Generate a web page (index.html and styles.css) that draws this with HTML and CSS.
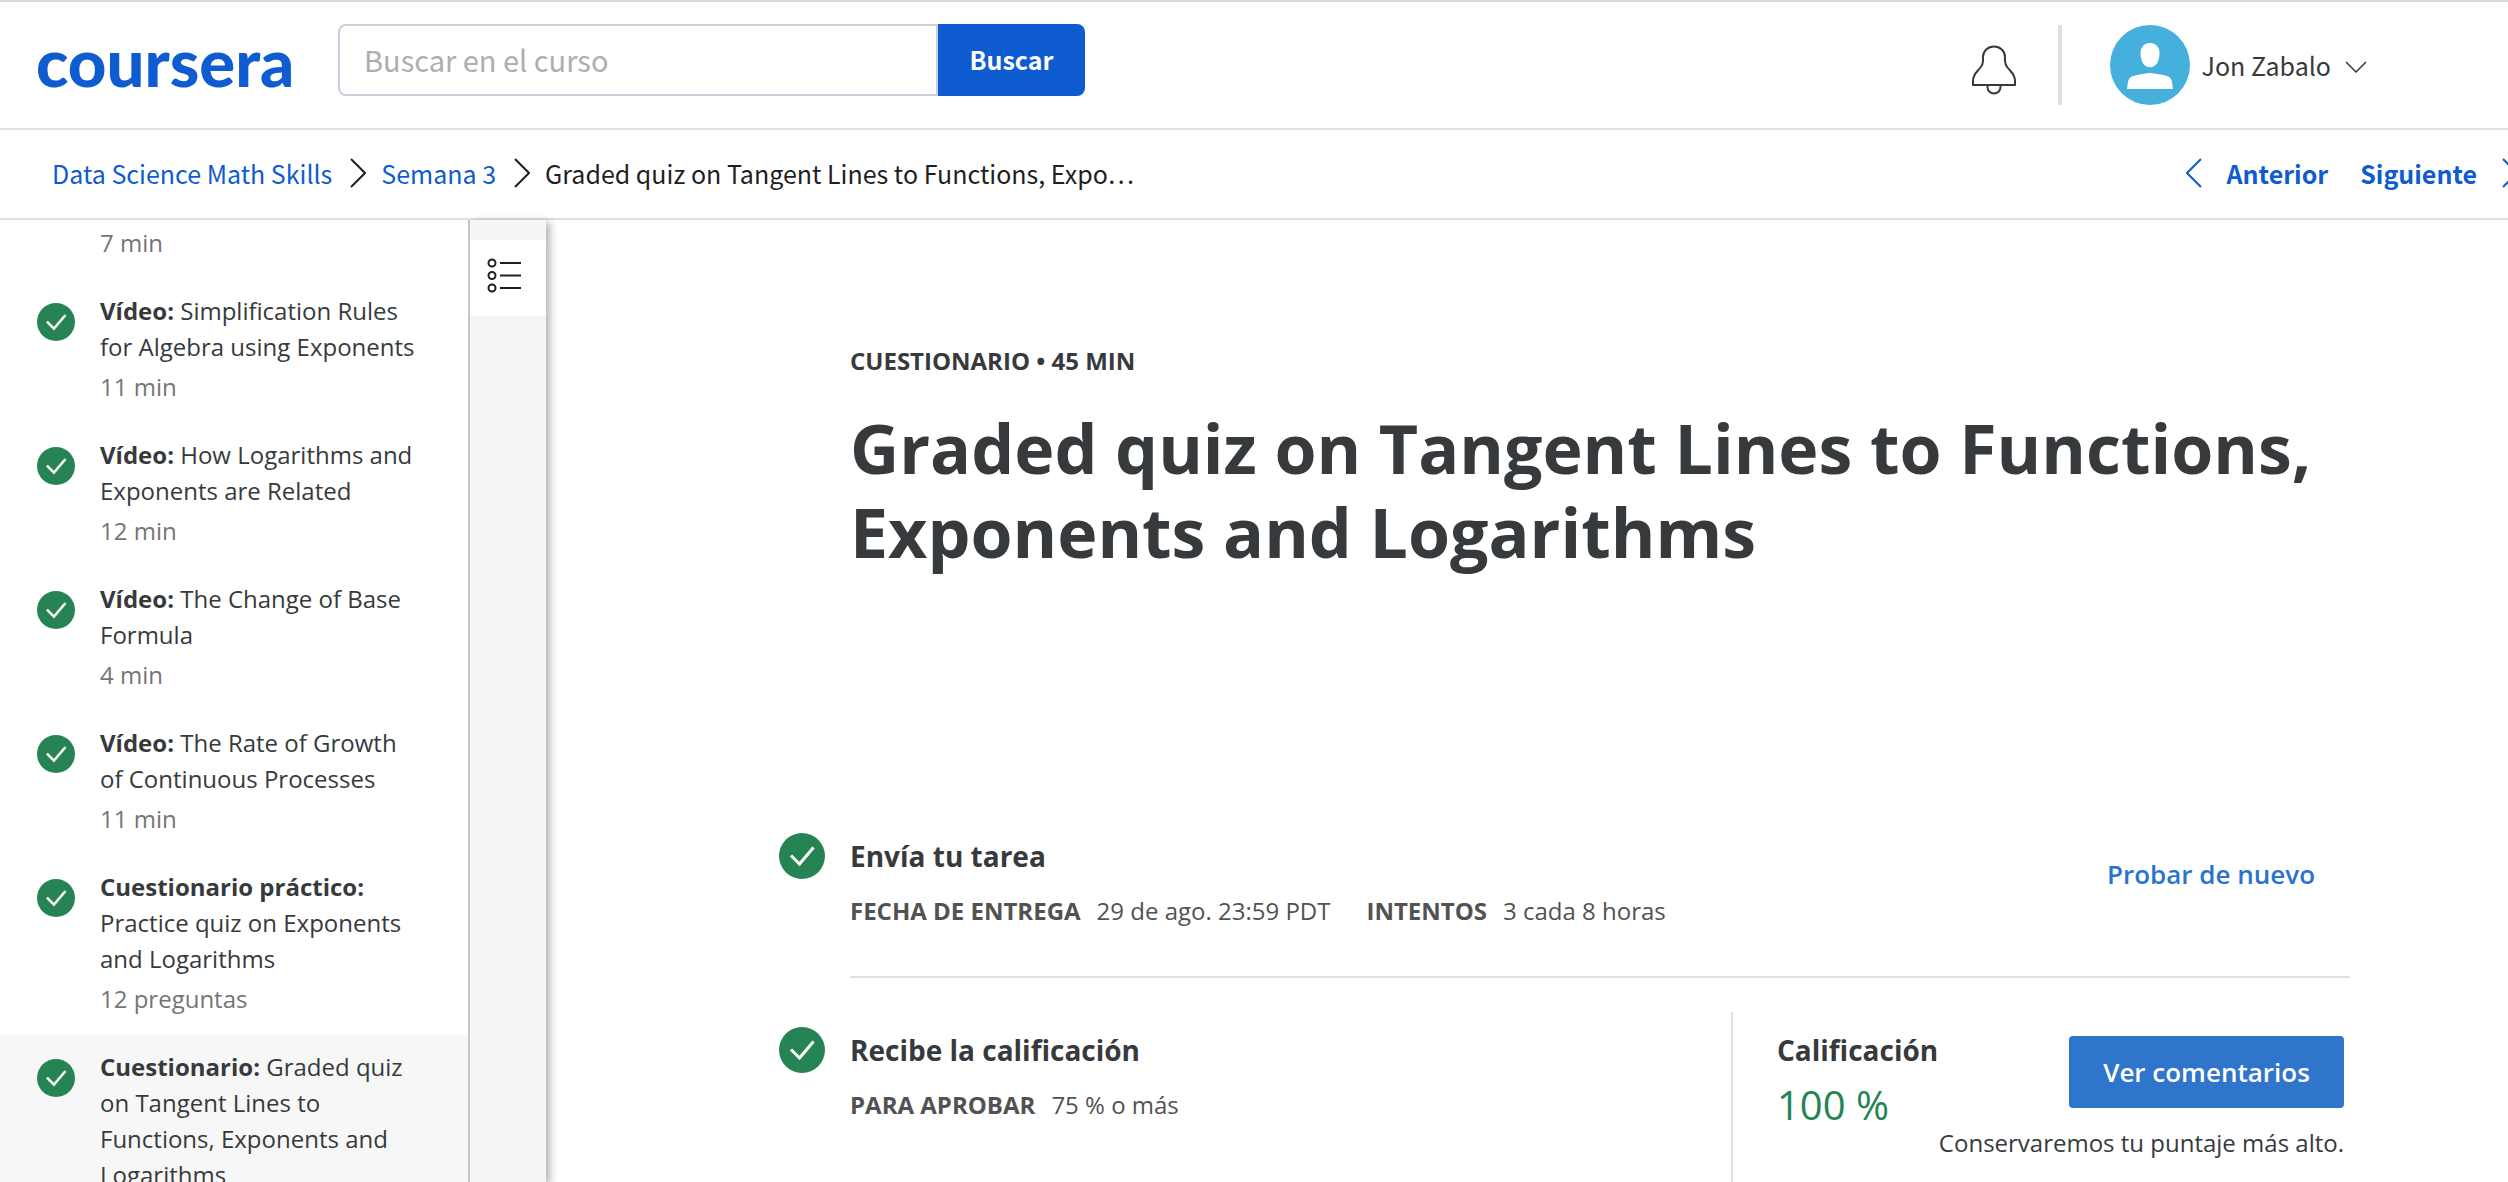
FILE: index.html
```html
<!DOCTYPE html>
<html lang="es">
<head>
<meta charset="utf-8">
<title>Graded quiz on Tangent Lines to Functions, Exponents and Logarithms | Coursera</title>
<link rel="stylesheet" href="styles.css">
</head>
<body>
<svg width="0" height="0" class="sprite" aria-hidden="true">
  <symbol id="check" viewBox="0 0 46 46">
    <circle cx="23" cy="23" r="23" fill="#258354"/>
    <path d="M12 22.500l8.500 8.500L34.500 14.500" fill="none" stroke="#fff" stroke-width="3"/>
  </symbol>
  <symbol id="next" viewBox="0 0 16 30">
    <path d="M1 1l14 14L1 29" fill="none" stroke="currentColor" stroke-width="2"/>
  </symbol>
  <symbol id="prev" viewBox="0 0 16 30">
    <path d="M15 1L1 15l14 14" fill="none" stroke="currentColor" stroke-width="2"/>
  </symbol>
</svg>

<header class="header">
  <a class="logo" href="#">coursera</a>
  <form class="search">
    <input class="search-input" type="text" placeholder="Buscar en el curso" aria-label="Buscar en el curso">
    <button class="search-button" type="button">Buscar</button>
  </form>
  <div class="account">
    <button class="bell" type="button" aria-label="Notificaciones">
      <svg width="46" height="50" viewBox="0 0 46 50" fill="none" stroke="#373a3c" stroke-width="2">
        <path d="M2 40V36C2 29 6 27 9.500 22.500C11.500 20 12 19 12 16V12C12 6 17 1.500 23 1.500S34 6 34 12V16C34 19 34.500 20 36.500 22.500C40 27 44 29 44 36V40Z"/>
        <path d="M16.500 40V42C16.500 46 19.500 48.500 23 48.500S29.500 46 29.500 42V40"/>
      </svg>
    </button>
    <button class="profile" type="button">
      <svg width="80" height="80" viewBox="0 0 80 80">
        <circle cx="40" cy="40" r="40" fill="#45b0db"/>
        <path d="M40 18C46 18 49.500 22.500 49.500 28C49.500 36 46 42.300 40 42.300S30.500 36 30.500 28C30.500 22.500 34 18 40 18Z" fill="#fff"/>
        <path d="M40 48C46 48.500 52 49.500 57 51C61 52.500 61.500 54.500 62 57L63 64H17L18 57C18.500 54.500 19 52.500 23 51C28 49.500 34 48.500 40 48Z" fill="#fff"/>
      </svg>
      <span class="profile-name">Jon Zabalo</span>
      <svg class="caret" width="22" height="12" viewBox="0 0 22 12"><path d="M1 1l10 10L21 1" fill="none" stroke="#373a3c" stroke-width="1.500"/></svg>
    </button>
  </div>
</header>

<nav class="crumbs" aria-label="Ruta">
  <a href="#">Data Science Math Skills</a>
  <svg width="16" height="30"><use href="#next"/></svg>
  <a href="#">Semana 3</a>
  <svg width="16" height="30"><use href="#next"/></svg>
  <span>Graded quiz on Tangent Lines to Functions, Expo…</span>
  <div class="pager">
    <a class="pager-link" href="#"><svg width="16" height="30"><use href="#prev"/></svg>Anterior</a>
    <a class="pager-link" href="#">Siguiente<svg width="16" height="30"><use href="#next"/></svg></a>
  </div>
</nav>

<div class="page">
  <aside class="lessons">
    <a class="lesson lesson-cut" href="#"><span class="lesson-text"><span class="lesson-meta">7 min</span></span></a>
    <a class="lesson" href="#"><svg class="lesson-icon"><use href="#check"/></svg><span class="lesson-text"><b>Vídeo:</b> Simplification Rules for Algebra using Exponents<span class="lesson-meta">11 min</span></span></a>
    <a class="lesson" href="#"><svg class="lesson-icon"><use href="#check"/></svg><span class="lesson-text"><b>Vídeo:</b> How Logarithms and Exponents are Related<span class="lesson-meta">12 min</span></span></a>
    <a class="lesson" href="#"><svg class="lesson-icon"><use href="#check"/></svg><span class="lesson-text"><b>Vídeo:</b> The Change of Base Formula<span class="lesson-meta">4 min</span></span></a>
    <a class="lesson" href="#"><svg class="lesson-icon"><use href="#check"/></svg><span class="lesson-text"><b>Vídeo:</b> The Rate of Growth of Continuous Processes<span class="lesson-meta">11 min</span></span></a>
    <a class="lesson" href="#"><svg class="lesson-icon"><use href="#check"/></svg><span class="lesson-text"><b>Cuestionario práctico:</b> Practice quiz on Exponents and Logarithms<span class="lesson-meta">12 preguntas</span></span></a>
    <a class="lesson lesson-current" href="#"><svg class="lesson-icon"><use href="#check"/></svg><span class="lesson-text"><b>Cuestionario:</b> Graded quiz on Tangent Lines to Functions, Exponents and Logarithms</span></a>
  </aside>
  <div class="rail">
    <button class="rail-button" type="button" aria-label="Lista de elementos">
      <svg width="36" height="36" viewBox="0 0 36 36" fill="none" stroke="#1f1f1f" stroke-width="2">
        <circle cx="5" cy="5" r="3.500"/><circle cx="5" cy="17.500" r="3.500"/><circle cx="5" cy="30" r="3.500"/>
        <path d="M13 5h21M13 17.500h21M13 30h21"/>
      </svg>
    </button>
  </div>
  <main class="content">
    <p class="kind">CUESTIONARIO • 45 MIN</p>
    <h1 class="title">Graded quiz on Tangent Lines to Functions, Exponents and Logarithms</h1>

    <section class="step step-submit">
      <svg class="step-icon"><use href="#check"/></svg>
      <div class="step-body">
        <h2 class="step-title">Envía tu tarea</h2>
        <dl class="facts">
          <div class="fact"><dt>FECHA DE ENTREGA</dt><dd>29 de ago. 23:59 PDT</dd></div>
          <div class="fact"><dt>INTENTOS</dt><dd>3 cada 8 horas</dd></div>
        </dl>
      </div>
      <button class="retry" type="button">Probar de nuevo</button>
    </section>

    <section class="step step-grade">
      <svg class="step-icon"><use href="#check"/></svg>
      <div class="step-body">
        <h2 class="step-title">Recibe la calificación</h2>
        <dl class="facts">
          <div class="fact"><dt>PARA APROBAR</dt><dd>75 % o más</dd></div>
        </dl>
      </div>
      <div class="grade">
        <div class="grade-score">
          <h2 class="step-title">Calificación</h2>
          <p class="score">100 %</p>
        </div>
        <div class="grade-side">
          <button class="feedback" type="button">Ver comentarios</button>
          <p class="note">Conservaremos tu puntaje más alto.</p>
        </div>
      </div>
    </section>
  </main>
</div>
</body>
</html>
```
FILE: styles.css
```css
* { box-sizing: border-box; }

body {
  margin: 0;
  height: 100vh;
  overflow: hidden;
  display: flex;
  flex-direction: column;
  background: #fff;
  color: #373a3c;
  font: 24px/36px "Open Sans", sans-serif;
}

h1, h2, p, dl, dd { margin: 0; }
a { color: inherit; text-decoration: none; }
button { border: 0; padding: 0; background: none; color: inherit; font: inherit; cursor: pointer; }
svg { flex: none; display: block; }
.sprite { position: absolute; }

/* Top bar */
.header {
  flex: none;
  display: flex;
  align-items: center;
  height: 130px;
  padding: 0 141px 0 36px;
  border-top: 2px solid #dadada;
  border-bottom: 2px solid #e0e0e0;
  font-family: "Noto Sans CJK SC", sans-serif;
}
.logo {
  flex: none;
  width: 302px;
  padding-bottom: 8px;
  color: #0f5bd0;
  font: 900 67px/72px Lato, sans-serif;
}
.search {
  display: flex;
  width: 747px;
  height: 72px;
  margin-bottom: 10px;
}
.search-input {
  flex: 1;
  min-width: 0;
  padding: 0 24px 2px;
  border: 2px solid #c9cfdc;
  border-radius: 8px 0 0 8px;
  color: #373a3c;
  font: 29px/36px "Noto Sans CJK SC", sans-serif;
}
.search-input::placeholder { color: #aeaeae; }
.search-button {
  width: 147px;
  padding-bottom: 2px;
  border-radius: 0 8px 8px 0;
  background: #0f5bd0;
  color: #fff;
  font-size: 25px;
  font-weight: 700;
}
.account { display: flex; align-items: center; margin-left: auto; }
.bell { margin: 10px 41px 0 0; }
.profile {
  display: flex;
  align-items: center;
  border-left: 4px solid #e0e0e0;
  padding-left: 48px;
}
.profile-name { margin: 0 14px 0 12px; font-size: 25px; }
.caret { margin-top: 4px; }

/* Breadcrumbs */
.crumbs {
  flex: none;
  display: flex;
  align-items: center;
  gap: 15px;
  height: 90px;
  padding: 0 0 2px 52px;
  border-bottom: 2px solid #e0e0e0;
  color: #1f1f1f;
  font: 25px/36px "Noto Sans CJK SC", sans-serif;
  white-space: nowrap;
}
.crumbs > svg { margin-left: 3px; }
.crumbs a { color: #0f5bd0; }
.pager { display: flex; gap: 32px; margin: 0 -10px 0 auto; font-weight: 700; }
.pager-link { display: flex; align-items: center; gap: 25px; }

/* Lesson list */
.page { flex: 1; min-height: 0; display: flex; }
.lessons {
  flex: none;
  width: 470px;
  overflow: hidden;
  border-right: 2px solid #c7c7c7;
}
.lesson {
  display: flex;
  gap: 25px;
  padding: 15px 50px 17px 37px;
}
.lesson-cut { padding: 1px 50px 17px 100px; }
.lesson-current { background: #f7f7f7; }
.lesson-icon { width: 38px; height: 38px; margin-top: 10px; }
.lesson-meta { display: block; margin-top: 4px; color: #757575; }
.rail {
  flex: none;
  width: 76px;
  padding-top: 20px;
  background: #f5f5f5;
  box-shadow: 4px 2px 8px rgba(0, 0, 0, .3);
  clip-path: inset(-6px -16px 0 0);
}
.rail-button {
  display: flex;
  align-items: center;
  width: 76px;
  height: 76px;
  padding: 0 0 4px 17px;
  border-radius: 4px;
  background: #fff;
}

/* Assignment */
.content { flex: 1; min-width: 0; padding: 123px 158px 0 233px; }
.kind { padding-left: 71px; font-weight: 700; }
.title {
  padding-left: 71px;
  margin: 27px 0 259px;
  font-size: 68px;
  font-weight: 700;
  line-height: 84px;
}
.step { display: flex; }
.step-icon { width: 46px; height: 46px; margin-right: 25px; }
.step-body { flex: 1; }
.step-title { font-size: 28px; font-weight: 700; line-height: 46px; }
.facts { display: flex; gap: 36px; margin-top: 14px; color: #525252; }
.fact { display: flex; gap: 16px; }
.fact dt { font-weight: 700; }
.retry {
  align-self: flex-start;
  margin: 23px 35px 0 0;
  color: #2a73cc;
  font-size: 26px;
  font-weight: 600;
}
.step-submit { position: relative; padding-bottom: 49px; }
.step-submit::after {
  content: "";
  position: absolute;
  inset: auto 0 0 71px;
  border-bottom: 2px solid #e0e0e0;
}
.step-grade > .step-icon, .step-grade > .step-body { margin-top: 49px; }
.grade {
  display: flex;
  justify-content: space-between;
  width: 619px;
  height: 200px;
  margin-top: 34px;
  padding: 15px 6px 0 44px;
  border-left: 2px solid #e0e0e0;
}
.grade-score { flex: none; width: 160px; }
.score { margin-top: 8px; color: #258354; font-size: 40px; line-height: 48px; white-space: nowrap; }
.grade-side {
  display: flex;
  flex-direction: column;
  align-items: flex-end;
  padding-top: 9px;
  white-space: nowrap;
}
.feedback {
  width: 275px;
  height: 72px;
  border-radius: 4px;
  background: #2f75cb;
  color: #fff;
  font-size: 26px;
  font-weight: 600;
}
.note { margin-top: 17px; }
```
